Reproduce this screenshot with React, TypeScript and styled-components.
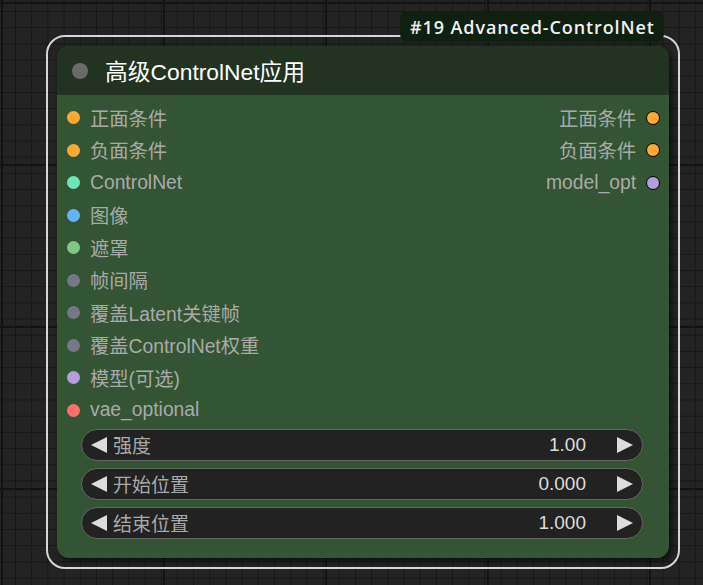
import React from 'react';
import styled, { createGlobalStyle } from 'styled-components';

const GlobalStyle = createGlobalStyle`
  html, body {
    margin: 0;
    padding: 0;
    background: #222222;
  }
  body {
    font-family: "Liberation Sans", "Noto Sans CJK SC", sans-serif;
  }
`;

// Graph canvas with the minor / major grid
const Canvas = styled.div`
  position: relative;
  width: 703px;
  height: 585px;
  overflow: hidden;
  background-color: #232323;
  background-image:
    linear-gradient(to right, #131313 2px, transparent 2px),
    linear-gradient(to bottom, #131313 2px, transparent 2px),
    linear-gradient(to right, #171717 1px, transparent 1px),
    linear-gradient(to bottom, #171717 1px, transparent 1px);
  background-size: 162px 162px, 162px 162px, 16.2px 16.2px, 16.2px 16.2px;
  background-position: 1px 0, 0 2px, 15px 0, 0 11px;
`;

// Selection outline around the node
const Selection = styled.div`
  position: absolute;
  left: 46px;
  top: 35px;
  width: 634px;
  height: 534px;
  box-sizing: border-box;
  border: 2px solid #d6d6d6;
  border-radius: 19px;
  padding: 9px;
`;

// Node id badge above the node
const Badge = styled.div`
  position: absolute;
  right: 14px;
  top: -26px;
  height: 31px;
  width: 264px;
  box-sizing: border-box;
  padding-left: 10px;
  display: flex;
  align-items: center;
  background: #0f1f10;
  border-radius: 8px;
  color: #f0f0f0;
  font-family: "Open Sans", "Liberation Sans", sans-serif;
  font-weight: 600;
  font-size: 18px;
  letter-spacing: 0.9px;
  white-space: nowrap;
`;

const Node = styled.div`
  width: 612px;
  height: 512px;
  background: #335533;
  border-radius: 12px;
  overflow: hidden;
  box-shadow: 3px 3px 5px rgba(0, 0, 0, 0.55);
  display: flex;
  flex-direction: column;
`;

const TitleBar = styled.div`
  height: 49px;
  flex: none;
  background: #223322;
  display: flex;
  align-items: center;
  padding-left: 15px;
  gap: 17px;
`;

const TitleDot = styled.span`
  width: 16px;
  height: 16px;
  border-radius: 50%;
  background: #6a6a6a;
`;

const TitleText = styled.span`
  color: #ffffff;
  font-size: 22.8px;
  white-space: nowrap;
`;

const Slots = styled.div`
  display: flex;
  justify-content: space-between;
  padding-top: 6.7px;
`;

const SlotColumn = styled.div`
  display: flex;
  flex-direction: column;
`;

const SlotRow = styled.div<{ $out?: boolean }>`
  height: 32.5px;
  display: flex;
  align-items: center;
  gap: 10px;
  padding: ${p => (p.$out ? '0 9px 0 0' : '0 0 0 10px')};
  justify-content: ${p => (p.$out ? 'flex-end' : 'flex-start')};
  color: #aaaaaa;
  font-size: 19.3px;
  white-space: nowrap;
`;

const SlotDot = styled.span<{ $color: string; $out?: boolean }>`
  flex: none;
  box-sizing: border-box;
  width: ${p => (p.$out ? '14px' : '13px')};
  height: ${p => (p.$out ? '14px' : '13px')};
  border-radius: 50%;
  background: ${p => p.$color};
  border: ${p => (p.$out ? '1px solid #000' : 'none')};
`;

const Widgets = styled.div`
  display: flex;
  flex-direction: column;
  gap: 7px;
  padding: 2.3px 26px 0 24px;
`;

const Widget = styled.div`
  height: 32px;
  box-sizing: border-box;
  border: 1px solid #666666;
  border-radius: 16px;
  background: #222222;
  display: flex;
  align-items: center;
  padding: 0 9px;
  font-size: 19px;
`;

const Arrow = styled.span<{ $dir: 'left' | 'right' }>`
  flex: none;
  width: 16px;
  height: 16px;
  background: #dddddd;
  clip-path: ${p =>
    p.$dir === 'left'
      ? 'polygon(0 50%, 100% 0, 100% 100%)'
      : 'polygon(0 0, 100% 50%, 0 100%)'};
`;

const WidgetLabel = styled.span`
  color: #aaaaaa;
  margin-left: 6px;
  flex: 1;
  white-space: nowrap;
`;

const WidgetValue = styled.span`
  color: #dddddd;
  margin-right: 31px;
`;

const inputs = [
  { label: '正面条件', color: '#ffa931' },
  { label: '负面条件', color: '#ffa931' },
  { label: 'ControlNet', color: '#6ee7b7' },
  { label: '图像', color: '#64b5f6' },
  { label: '遮罩', color: '#81c784' },
  { label: '帧间隔', color: '#777788' },
  { label: '覆盖Latent关键帧', color: '#777788' },
  { label: '覆盖ControlNet权重', color: '#777788' },
  { label: '模型(可选)', color: '#b39ddb' },
  { label: 'vae_optional', color: '#ff6e6e' },
];

const outputs = [
  { label: '正面条件', color: '#ffa931' },
  { label: '负面条件', color: '#ffa931' },
  { label: 'model_opt', color: '#b39ddb' },
];

const widgets = [
  { label: '强度', value: '1.00' },
  { label: '开始位置', value: '0.000' },
  { label: '结束位置', value: '1.000' },
];

export default function App() {
  return (
    <>
      <GlobalStyle />
      <Canvas>
        <Selection>
          <Badge>#19 Advanced-ControlNet</Badge>
          <Node>
            <TitleBar>
              <TitleDot />
              <TitleText>高级ControlNet应用</TitleText>
            </TitleBar>
            <Slots>
              <SlotColumn>
                {inputs.map(s => (
                  <SlotRow key={s.label}>
                    <SlotDot $color={s.color} />
                    {s.label}
                  </SlotRow>
                ))}
              </SlotColumn>
              <SlotColumn>
                {outputs.map(s => (
                  <SlotRow key={s.label} $out>
                    {s.label}
                    <SlotDot $color={s.color} $out />
                  </SlotRow>
                ))}
              </SlotColumn>
            </Slots>
            <Widgets>
              {widgets.map(w => (
                <Widget key={w.label}>
                  <Arrow $dir="left" />
                  <WidgetLabel>{w.label}</WidgetLabel>
                  <WidgetValue>{w.value}</WidgetValue>
                  <Arrow $dir="right" />
                </Widget>
              ))}
            </Widgets>
          </Node>
        </Selection>
      </Canvas>
    </>
  );
}
